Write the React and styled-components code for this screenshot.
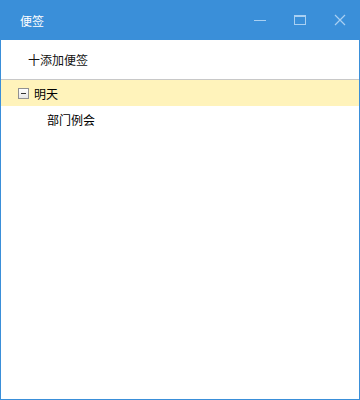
import styled, { createGlobalStyle } from 'styled-components';

const GlobalStyle = createGlobalStyle`
  html, body { margin: 0; padding: 0; background: #fff; }
  body { font-family: "Noto Sans CJK SC", "Microsoft YaHei", sans-serif; }
`;

const Window = styled.div`
  width: 360px;
  height: 400px;
  box-sizing: border-box;
  border: 1px solid #3a8fd9;
  border-top: none;
  display: flex;
  flex-direction: column;
  background: #fff;
`;

const TitleBar = styled.div`
  height: 40px;
  margin: 0 -1px;
  background: #3a8fd9;
  display: flex;
  align-items: center;
  padding-left: 20px;
  color: #fff;
  font-size: 12px;
`;

const Title = styled.div`
  flex: 1;
  line-height: 1;
  margin-top: 2px;
`;

const CtrlButton = styled.div`
  width: 40px;
  height: 40px;
  display: flex;
  align-items: center;
  justify-content: center;
`;

const Toolbar = styled.div`
  height: 39px;
  display: flex;
  align-items: center;
  padding-left: 27px;
  border-bottom: 1px solid #c8c8c8;
  font-size: 12px;
  color: #111;
`;

const Row = styled.div`
  height: 26px;
  display: flex;
  align-items: center;
  padding-left: ${p => p.$indent}px;
  background: ${p => (p.$selected ? '#fff3bb' : 'transparent')};
  font-size: 12px;
  color: #000;
`;

const Toggle = styled.div`
  width: 9px;
  height: 9px;
  border: 1px solid #919191;
  background: linear-gradient(#ffffff, #e6e6e6);
  margin-right: 5px;
  position: relative;
  &::after {
    content: '';
    position: absolute;
    left: 2px;
    right: 2px;
    top: 4px;
    height: 1px;
    background: #333;
  }
`;

const App = () => (
  <>
    <GlobalStyle />
    <Window>
      <TitleBar>
        <Title>便签</Title>
        <CtrlButton>
          <svg width="14" height="14" viewBox="0 0 14 14">
            <line x1="1" y1="7.5" x2="13" y2="7.5" stroke="#a9d0f2" strokeWidth="1" />
          </svg>
        </CtrlButton>
        <CtrlButton>
          <svg width="14" height="14" viewBox="0 0 14 14">
            <rect x="1.5" y="2.5" width="11" height="9" fill="none" stroke="#a9d0f2" strokeWidth="1" />
            <line x1="1.5" y1="3.5" x2="12.5" y2="3.5" stroke="#a9d0f2" strokeWidth="1" />
          </svg>
        </CtrlButton>
        <CtrlButton>
          <svg width="14" height="14" viewBox="0 0 14 14">
            <path d="M2 2 L12 12 M12 2 L2 12" stroke="#a9d0f2" strokeWidth="1.2" />
          </svg>
        </CtrlButton>
      </TitleBar>
      <Toolbar>十添加便签</Toolbar>
      <Row $selected $indent={17}>
        <Toggle />
        明天
      </Row>
      <Row $indent={46}>部门例会</Row>
    </Window>
  </>
);

export default App;
